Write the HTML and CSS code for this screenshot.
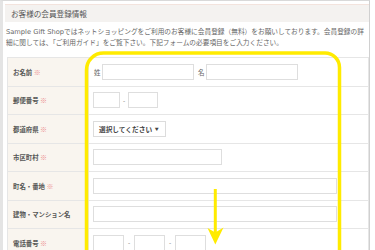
FILE: index.html
```html
<!DOCTYPE html>
<html lang="ja">
<head>
    <meta charset="UTF-8">
    <meta name="viewport" content="width=device-width, initial-scale=1.0">
    <title>お客様の会員登録情報</title>
    <link rel="stylesheet" href="styles.css">
</head>
<body>
    <div class="frame">
        <h2 class="section-title">お客様の会員登録情報</h2>
        <p class="intro">Sample Gift Shopではネットショッピングをご利用のお客様に会員登録（無料）をお願いしております。会員登録の詳細に関しては、「ご利用ガイド」をご覧下さい。下記フォームの必要項目をご入力ください。</p>

        <table class="entry-table">
            <tr>
                <th>お名前 <span class="req">※</span></th>
                <td>
                    <span class="sub">姓</span><input type="text" class="w-name"><span class="sub sub-gap">名</span><input type="text" class="w-name">
                </td>
            </tr>
            <tr>
                <th>郵便番号 <span class="req">※</span></th>
                <td>
                    <input type="text" class="w-zip1"><span class="dash">-</span><input type="text" class="w-zip2">
                </td>
            </tr>
            <tr>
                <th>都道府県 <span class="req">※</span></th>
                <td>
                    <div class="select-box">選択してください <span class="caret">▼</span></div>
                </td>
            </tr>
            <tr>
                <th>市区町村 <span class="req">※</span></th>
                <td><input type="text" class="w-city"></td>
            </tr>
            <tr>
                <th>町名・番地 <span class="req">※</span></th>
                <td><input type="text" class="w-long"></td>
            </tr>
            <tr>
                <th>建物・マンション名</th>
                <td><input type="text" class="w-long"></td>
            </tr>
            <tr>
                <th>電話番号 <span class="req">※</span></th>
                <td>
                    <input type="text" class="w-tel"><span class="dash">-</span><input type="text" class="w-tel"><span class="dash">-</span><input type="text" class="w-tel">
                </td>
            </tr>
        </table>

        <!-- annotation drawn over the form -->
        <svg class="annotation" width="375" height="250" viewBox="0 0 375 250">
            <path d="M86.5 252 V70 A17 17 0 0 1 103.5 53 H325 A14.5 14.5 0 0 1 339.5 67.5 V252" fill="none" stroke="#ffeb00" stroke-width="3.5"/>
            <line x1="215.3" y1="189" x2="215.3" y2="234" stroke="#ffeb00" stroke-width="3"/>
            <polygon points="207.5,228 215.3,244.5 223.5,227.5 215.3,232.5" fill="#ffeb00"/>
        </svg>
    </div>
</body>
</html>
```

FILE: styles.css
```css
body { margin: 0; background: #fff; font-family: "DejaVu Sans", "Noto Sans CJK JP", sans-serif; color: #555; }
.frame { position: relative; width: 366px; height: 249px; overflow: hidden; border-top: 1px solid #d9d9d9; border-left: 3px solid #e4e4e4; border-right: 1px solid #d0d0d0; }

.section-title { margin: 3px 0 0 2px; height: 18px; line-height: 18px; padding-left: 6px; background: #f4f2f0; border-top: 1px solid #f3e3dd; box-sizing: border-box; font-size: 7.6px; font-weight: normal; color: #555; font-family: "Noto Sans CJK JP", sans-serif; }

.intro { margin: 5px 0 0; padding-left: 3px; font-size: 6.7px; line-height: 11px; color: #666; }

.entry-table { margin: 8px 0 0 4px; width: 362px; border-collapse: collapse; border: 1px solid #e6e6e6; }
.entry-table th, .entry-table td { height: 27.5px; padding: 0; border-bottom: 1px solid #e6e6e6; vertical-align: middle; }
.entry-table th { width: 75px; padding-left: 5px; background: #f9f5ef; text-align: left; font-size: 6.4px; font-weight: bold; color: #555; font-family: "Noto Sans CJK JP", sans-serif; border-right: 1px solid #ece8e2; }
.entry-table td { padding-left: 4px; font-size: 6.5px; white-space: nowrap; }
.req { color: #ec8c8c; font-weight: normal; font-size: 7px; }

.entry-table input { height: 16px; padding: 0; margin: 0; border: 1px solid #dedede; background: #fff; box-sizing: border-box; vertical-align: middle; }
.sub { display: inline-block; width: 8px; padding-left: 1px; color: #666; vertical-align: middle; font-family: "Noto Sans CJK JP", sans-serif; }
.sub-gap { margin-left: 3px; }
.dash { display: inline-block; width: 8px; text-align: center; vertical-align: middle; color: #777; font-size: 6px; }

.w-name { width: 92px; }
.w-zip1 { width: 27px; }
.w-zip2 { width: 30px; }
.w-city { width: 129px; }
.w-long { width: 244px; }
.w-tel { width: 31px; }
.w-tel + .dash { width: 10px; }

.select-box { display: inline-block; width: 73px; height: 16px; line-height: 15px; padding-left: 5px; border: 1px solid #dcdcdc; box-sizing: border-box; vertical-align: middle; font-size: 6.7px; font-weight: bold; color: #444; font-family: "Noto Sans CJK JP", sans-serif; }
.caret { font-size: 4px; margin-left: 1px; vertical-align: 1px; }

.annotation { position: absolute; top: -1px; left: -3px; pointer-events: none; }
```
